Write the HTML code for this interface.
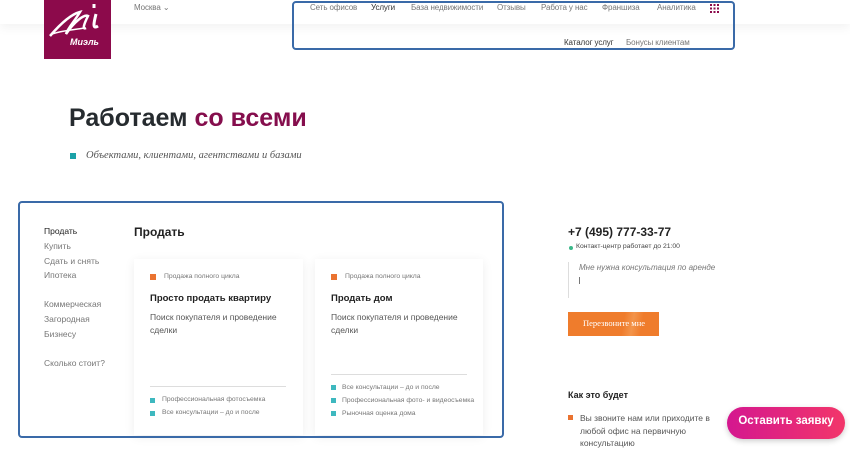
<!DOCTYPE html>
<html><head><meta charset="utf-8"><style>
*{margin:0;padding:0;box-sizing:border-box}
body{width:850px;height:446px;overflow:hidden;background:#fff;font-family:"Liberation Sans","Noto Sans CJK JP",sans-serif;position:relative;color:#333}
.a{position:absolute;white-space:nowrap}
.hdr{position:absolute;left:0;top:0;width:850px;height:24px;background:#fff;box-shadow:0 4px 10px rgba(0,0,0,.05)}
.nav{font-size:8px;color:#777;letter-spacing:-0.1px}
.box{position:absolute;border:2px solid #3a6aa8;border-radius:4px}
.card{position:absolute;background:#fff;box-shadow:0 2px 10px rgba(0,0,0,.07)}
.side{font-size:8.5px;color:#777}
.sq{position:absolute;width:6px;height:6px;background:#ea7330}
.gift{position:absolute;width:5px;height:5px;background:#3eb8bf}
.sm{font-size:6.8px;color:#777}
</style></head><body>
<div class="hdr"></div>
<div class="a" style="left:44px;top:0;width:67px;height:59px;background:#8c0a4b"></div>
<svg class="a" style="left:44px;top:0" width="67" height="59" viewBox="0 0 67 59">
<path d="M6 36 C18 22 28 14 36 12 C30 22 24 28 22 34 C30 22 40 14 44 16 C40 24 38 30 42 28" stroke="#fff" stroke-width="2.5" fill="none"/>
<path d="M50 4 l0 4 M52 14 C50 22 48 30 54 26" stroke="#fff" stroke-width="3" fill="none"/>
<path d="M8 34 C20 30 30 30 40 28" stroke="#fff" stroke-width="1.5" fill="none"/>
</svg>
<div class="a" style="left:70px;top:37px;font-size:9px;color:#fff;font-weight:bold;font-style:italic">Миэль</div>
<div class="a nav" style="left:134px;top:3px">Москва &#8964;</div>
<div class="a nav" style="left:310px;top:3px">Сеть офисов</div>
<div class="a nav" style="left:371px;top:3px;color:#333">Услуги</div>
<div class="a nav" style="left:411px;top:3px">База недвижимости</div>
<div class="a nav" style="left:497px;top:3px">Отзывы</div>
<div class="a nav" style="left:541px;top:3px">Работа у нас</div>
<div class="a nav" style="left:602px;top:3px">Франшиза</div>
<div class="a nav" style="left:657px;top:3px">Аналитика</div>
<div class="a" style="left:710px;top:4px;width:9px;height:9px;background:repeating-linear-gradient(90deg,#8c0a4b 0 2px,transparent 2px 3.5px),#fff;-webkit-mask:repeating-linear-gradient(0deg,#000 0 2px,transparent 2px 3.5px)"></div>
<div class="a nav" style="left:564px;top:38px;color:#333">Каталог услуг</div>
<div class="a nav" style="left:626px;top:38px">Бонусы клиентам</div>
<div class="box" style="left:292px;top:1px;width:443px;height:49px"></div>

<div class="a" style="left:69px;top:104px;font-size:25px;font-weight:bold;color:#262b2f">Работаем <span style="color:#850e4d">со всеми</span></div>
<div class="a" style="left:70px;top:153px;width:6px;height:6px;background:#1ba2a8"></div>
<div class="a" style="left:86px;top:150px;font-family:'Liberation Serif',serif;font-style:italic;font-size:10.5px;color:#555">Объектами, клиентами, агентствами и базами</div>

<div class="a side" style="left:44px;top:226px;color:#222">Продать</div>
<div class="a side" style="left:44px;top:241px">Купить</div>
<div class="a side" style="left:44px;top:256px">Сдать и снять</div>
<div class="a side" style="left:44px;top:270px">Ипотека</div>
<div class="a side" style="left:44px;top:299px">Коммерческая</div>
<div class="a side" style="left:44px;top:314px">Загородная</div>
<div class="a side" style="left:44px;top:329px">Бизнесу</div>
<div class="a side" style="left:44px;top:358px">Сколько стоит?</div>
<div class="a" style="left:134px;top:225px;font-size:12px;font-weight:bold;color:#222">Продать</div>

<div class="card" style="left:134px;top:259px;width:169px;height:176px"></div>
<div class="sq" style="left:150px;top:274px"></div>
<div class="a sm" style="left:164px;top:273px">Продажа полного цикла</div>
<div class="a" style="left:150px;top:293px;font-size:9.5px;font-weight:bold;color:#222">Просто продать квартиру</div>
<div class="a" style="left:150px;top:311px;font-size:8.5px;color:#555;line-height:12.5px">Поиск покупателя и проведение<br>сделки</div>
<div class="a" style="left:150px;top:386px;width:136px;height:1px;background:#ddd"></div>
<div class="gift" style="left:150px;top:398px"></div><div class="a sm" style="left:162px;top:396px">Профессиональная фотосъемка</div>
<div class="gift" style="left:150px;top:411px"></div><div class="a sm" style="left:162px;top:409px">Все консультации – до и после</div>

<div class="card" style="left:315px;top:259px;width:168px;height:176px"></div>
<div class="sq" style="left:331px;top:274px"></div>
<div class="a sm" style="left:345px;top:273px">Продажа полного цикла</div>
<div class="a" style="left:331px;top:293px;font-size:9.5px;font-weight:bold;color:#222">Продать дом</div>
<div class="a" style="left:331px;top:311px;font-size:8.5px;color:#555;line-height:12.5px">Поиск покупателя и проведение<br>сделки</div>
<div class="a" style="left:331px;top:374px;width:136px;height:1px;background:#ddd"></div>
<div class="gift" style="left:331px;top:385px"></div><div class="a sm" style="left:342px;top:384px">Все консультации – до и после</div>
<div class="gift" style="left:331px;top:398px"></div><div class="a sm" style="left:342px;top:397px">Профессиональная фото- и видеосъемка</div>
<div class="gift" style="left:331px;top:411px"></div><div class="a sm" style="left:342px;top:410px">Рыночная оценка дома</div>
<div class="box" style="left:18px;top:201px;width:486px;height:237px"></div>

<div class="a" style="left:568px;top:225px;font-size:12px;font-weight:bold;color:#222">+7 (495) 777-33-77</div>
<div class="a" style="left:569px;top:246px;width:4px;height:4px;border-radius:50%;background:#3cb88a"></div>
<div class="a" style="left:576px;top:243px;font-size:6.8px;color:#444">Контакт-центр работает до 21:00</div>
<div class="a" style="left:568px;top:262px;width:1px;height:36px;background:#ddd"></div>
<div class="a" style="left:579px;top:263px;font-size:8px;font-style:italic;color:#777">Мне нужна консультация по аренде</div>
<div class="a" style="left:579px;top:277px;width:1px;height:7px;background:#777"></div>
<div class="a" style="left:568px;top:312px;width:91px;height:24px;background:linear-gradient(100deg,#ef7c2c 60%,#f3944a 70%,#ef7c2c 80%)"></div>
<div class="a" style="left:583px;top:318px;font-family:'Liberation Serif',serif;font-size:8.5px;color:#fff">Перезвоните мне</div>
<div class="a" style="left:568px;top:390px;font-size:9px;font-weight:bold;color:#222">Как это будет</div>
<div class="sq" style="left:568px;top:415px;width:5px;height:5px"></div>
<div class="a" style="left:580px;top:412px;font-size:8.5px;color:#555;line-height:12.5px">Вы звоните нам или приходите в<br>любой офис на первичную<br>консультацию</div>
<div class="a" style="left:727px;top:407px;width:118px;height:32px;border-radius:16px;background:linear-gradient(90deg,#d4178f,#f2366a);box-shadow:0 2px 6px rgba(0,0,0,.2)"></div>
<div class="a" style="left:727px;top:415px;width:118px;text-align:center;font-size:11.5px;font-weight:bold;color:#fff">Оставить заявку</div>
</body></html>
